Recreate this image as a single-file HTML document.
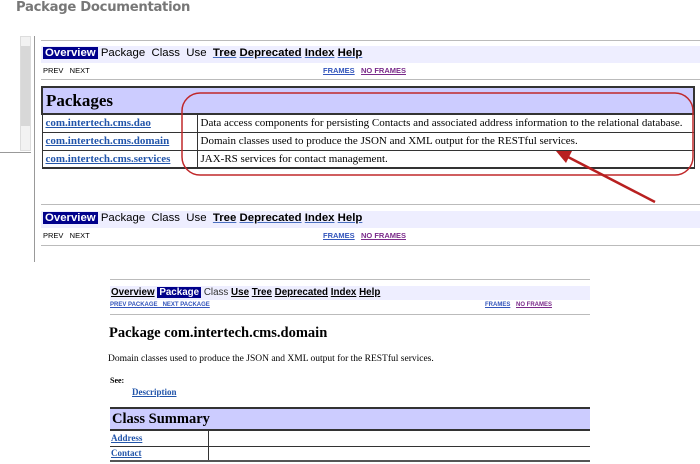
<!DOCTYPE html>
<html><head><style>
*{margin:0;padding:0;box-sizing:border-box}
body{width:700px;height:464px;background:#fff;position:relative;overflow:hidden;font-family:"Liberation Sans",Arial,sans-serif}
.a{position:absolute;white-space:nowrap}
.s{font-family:"Liberation Serif",serif}
.hr{position:absolute;height:1px;background:#bbb}
.bar{position:absolute;background:#eeeeff}
.nav{font-size:11.4px;color:#000;}
.nav b{font-weight:bold;text-decoration:underline;color:#000;text-decoration-color:#4a6fc0}
.hl{background:#00008b;color:#fff;padding:0 2px;font-weight:bold}
.sm{font-size:7.5px;color:#000}
.lk{font-size:7.5px;color:#3355bb;text-decoration:underline;font-weight:bold}
.vk{font-size:7.5px;color:#7a2a8a;text-decoration:underline;font-weight:bold}
table{border-collapse:collapse;position:absolute}
td{border:1px solid #333;font-family:"Liberation Serif",serif;font-size:11px;padding:0 3px;height:18px;white-space:nowrap}
td a{color:#2255aa;font-weight:bold;text-decoration:underline}
th{background:#ccccff;text-align:left;font-family:"Liberation Serif",serif;border:2px solid #333}
</style></head><body>
<div class="a" style="left:16px;top:0px;font-size:13.2px;font-weight:bold;color:#777;font-family:'DejaVu Sans',sans-serif;letter-spacing:-0.3px">Package Documentation</div>
<div class="a" style="left:20px;top:36px;width:11px;height:115px;background:#f2f2f2;border:1px solid #ddd"></div>
<div class="a" style="left:21px;top:46px;width:9px;height:80px;background:#d8d8d8"></div>
<div class="a" style="left:0;top:152px;width:31px;height:1px;background:#999"></div>
<div class="a" style="left:34px;top:36px;width:1px;height:226px;background:#999"></div>

<div class="hr" style="left:41px;top:40px;width:659px"></div>
<div class="bar" style="left:41px;top:46px;width:659px;height:17px"></div>
<div class="a nav" style="left:43px;top:47px"><span class="hl">Overview</span> Package&nbsp; Class&nbsp; Use&nbsp; <b>Tree</b> <b>Deprecated</b> <b>Index</b> <b>Help</b></div>
<div class="a sm" style="left:43px;top:66px">PREV&nbsp;&nbsp; NEXT</div>
<div class="a lk" style="left:323px;top:66px">FRAMES</div>
<div class="a vk" style="left:361px;top:66px">NO FRAMES</div>
<div class="hr" style="left:41px;top:79px;width:659px"></div>

<table style="left:41px;top:86px;width:654px">
<tr><th colspan="2" style="height:27px;font-size:17px;padding-left:3px">Packages</th></tr>
<tr><td style="width:155px"><a>com.intertech.cms.dao</a></td><td>Data access components for persisting Contacts and associated address information to the relational database.</td></tr>
<tr><td><a>com.intertech.cms.domain</a></td><td>Domain classes used to produce the JSON and XML output for the RESTful services.</td></tr>
<tr><td style="border-bottom:2px solid #333"><a>com.intertech.cms.services</a></td><td style="border-bottom:2px solid #333">JAX-RS services for contact management.</td></tr>
</table>

<svg class="a" style="left:0;top:0" width="700" height="464">
<rect x="182" y="93" width="511" height="82" rx="18" fill="none" stroke="#c0282a" stroke-width="1.5"/>
<line x1="655" y1="202" x2="568" y2="157" stroke="#b82020" stroke-width="2.5"/>
<polygon points="556,151 572,151 566,163" fill="#b82020"/>
</svg>

<div class="hr" style="left:41px;top:204px;width:659px"></div>
<div class="bar" style="left:41px;top:211px;width:659px;height:17px"></div>
<div class="a nav" style="left:43px;top:212px"><span class="hl">Overview</span> Package&nbsp; Class&nbsp; Use&nbsp; <b>Tree</b> <b>Deprecated</b> <b>Index</b> <b>Help</b></div>
<div class="a sm" style="left:43px;top:231px">PREV&nbsp;&nbsp; NEXT</div>
<div class="a lk" style="left:323px;top:231px">FRAMES</div>
<div class="a vk" style="left:361px;top:231px">NO FRAMES</div>
<div class="hr" style="left:41px;top:245px;width:659px"></div>

<div class="hr" style="left:110px;top:279px;width:480px"></div>
<div class="bar" style="left:110px;top:286px;width:480px;height:14px"></div>
<div class="a" style="left:111px;top:287px;font-size:9.8px;font-weight:bold"><u>Overview</u> <span class="hl">Package</span> <span style="font-weight:normal;color:#333">Class</span> <u>Use</u> <u>Tree</u> <u>Deprecated</u> <u>Index</u> <u>Help</u></div>
<div class="a lk" style="left:110px;top:302px;font-size:6px">PREV PACKAGE&nbsp;&nbsp; NEXT PACKAGE</div>
<div class="a lk" style="left:485px;top:302px;font-size:6px">FRAMES</div>
<div class="a vk" style="left:516px;top:302px;font-size:6px">NO FRAMES</div>
<div class="hr" style="left:110px;top:314px;width:480px"></div>
<div class="a s" style="left:109px;top:325px;font-size:14.5px;font-weight:bold">Package com.intertech.cms.domain</div>
<div class="a s" style="left:108px;top:354px;font-size:9.5px">Domain classes used to produce the JSON and XML output for the RESTful services.</div>
<div class="a s" style="left:110px;top:376px;font-size:8px;font-weight:bold">See:</div>
<div class="a s" style="left:132px;top:387px;font-size:9px;font-weight:bold;color:#2255aa;text-decoration:underline">Description</div>
<table style="left:110px;top:407px;width:480px">
<tr><th colspan="2" style="height:22px;font-size:14.5px;padding-left:2px;border-left:none;border-right:none">Class Summary</th></tr>
<tr><td style="width:98px;height:16px;font-size:9px;border-left:none;padding-left:1px"><a>Address</a></td><td style="border-right:none;height:16px"></td></tr>
<tr><td style="height:15px;font-size:9px;border-left:none;padding-left:1px;border-bottom:2px solid #555"><a>Contact</a></td><td style="border-right:none;border-bottom:2px solid #555;height:15px"></td></tr>
</table>
</body></html>
